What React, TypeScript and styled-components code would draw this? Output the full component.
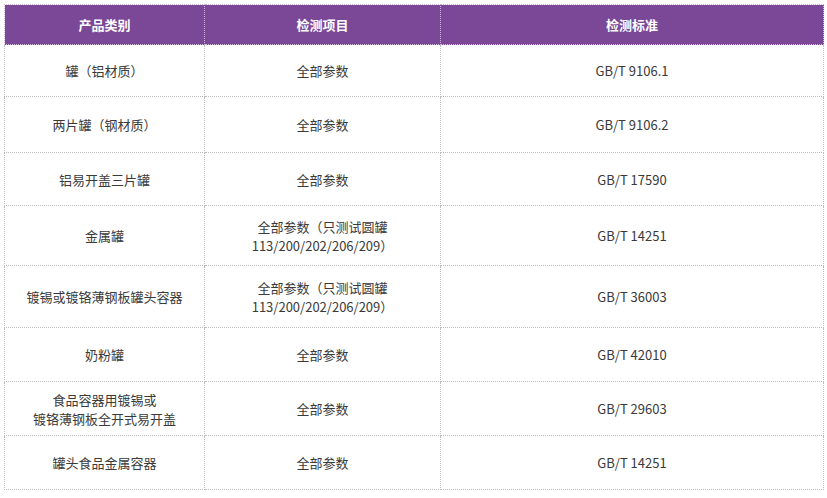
import React from "react";
import styled, { createGlobalStyle } from "styled-components";

const Global = createGlobalStyle`
  html, body { margin: 0; padding: 0; background: #fff; }
  body { padding: 4px 4px 0 4px; font-family: "Noto Sans CJK SC", "Noto Sans", sans-serif; }
`;

const Table = styled.table`
  width: 819px;
  border-collapse: collapse;
  table-layout: fixed;
  font-size: 13px;
  color: #3a3a3a;
`;

const HeadCell = styled.th`
  height: 39px;
  padding: 0;
  background: #7b4897;
  color: #fff;
  font-weight: 700;
  font-size: 13px;
  text-align: center;
  border: 1px dotted #c9b9d3;
`;

const Cell = styled.td<{ $h: number }>`
  height: ${(p) => p.$h}px;
  padding: 0;
  text-align: center;
  vertical-align: middle;
  line-height: 19px;
  border: 1px dotted #bdbdbd;
`;

const rows: { h: number; a: React.ReactNode; b: React.ReactNode; c: string }[] = [
  { h: 51, a: "罐（铝材质）", b: "全部参数", c: "GB/T 9106.1" },
  { h: 55, a: "两片罐（钢材质）", b: "全部参数", c: "GB/T 9106.2" },
  { h: 52, a: "铝易开盖三片罐", b: "全部参数", c: "GB/T 17590" },
  { h: 59, a: "金属罐", b: <>全部参数（只测试圆罐<br />113/200/202/206/209）</>, c: "GB/T 14251" },
  { h: 61, a: "镀锡或镀铬薄钢板罐头容器", b: <>全部参数（只测试圆罐<br />113/200/202/206/209）</>, c: "GB/T 36003" },
  { h: 53, a: "奶粉罐", b: "全部参数", c: "GB/T 42010" },
  { h: 53, a: <>食品容器用镀锡或<br />镀铬薄钢板全开式易开盖</>, b: "全部参数", c: "GB/T 29603" },
  { h: 53, a: "罐头食品金属容器", b: "全部参数", c: "GB/T 14251" },
];

export default function App() {
  return (
    <>
      <Global />
      <Table>
        <colgroup>
          <col style={{ width: 200 }} />
          <col style={{ width: 236 }} />
          <col style={{ width: 383 }} />
        </colgroup>
        <thead>
          <tr>
            <HeadCell>产品类别</HeadCell>
            <HeadCell>检测项目</HeadCell>
            <HeadCell>检测标准</HeadCell>
          </tr>
        </thead>
        <tbody>
          {rows.map((r, i) => (
            <tr key={i}>
              <Cell $h={r.h}>{r.a}</Cell>
              <Cell $h={r.h}>{r.b}</Cell>
              <Cell $h={r.h}>{r.c}</Cell>
            </tr>
          ))}
        </tbody>
      </Table>
    </>
  );
}
